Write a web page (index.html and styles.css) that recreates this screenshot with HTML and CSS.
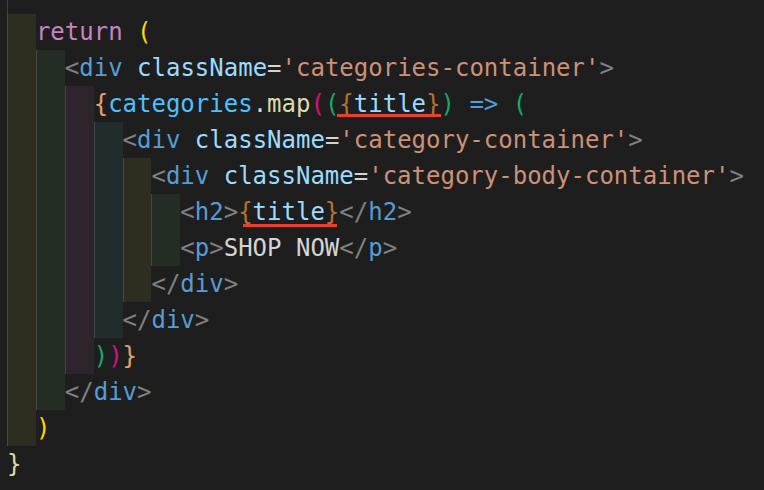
FILE: index.html
```html
<!DOCTYPE html>
<html lang="en">
<head>
  <meta charset="UTF-8" />
  <meta name="viewport" content="width=device-width, initial-scale=1.0">
  <title>categories snippet</title>
  <link rel="stylesheet" href="styles.css">
</head>
<body>
  <div class="editor">
    <div class="line top"><span class="guide"></span></div>
    <div class="line"><span class="ind l1"></span><span class="code"><span class="kw">return</span> <span class="p1">(</span></span></div>
    <div class="line"><span class="ind l1"></span><span class="ind l2"></span><span class="code"><span class="pt">&lt;</span><span class="tag">div</span> <span class="attr">className</span><span class="op">=</span><span class="str">'categories-container'</span><span class="pt">&gt;</span></span></div>
    <div class="line"><span class="ind l1"></span><span class="ind l2"></span><span class="ind l3"></span><span class="code"><span class="jsx">{</span><span class="var">categories</span><span class="op">.</span><span class="fn">map</span><span class="p2">(</span><span class="p3">(</span><span class="mark mark-a"><span class="brace">{</span><span class="prop">title</span><span class="brace">}</span></span><span class="p3">)</span> <span class="arrow">=&gt;</span> <span class="p3">(</span></span></div>
    <div class="line"><span class="ind l1"></span><span class="ind l2"></span><span class="ind l3"></span><span class="ind l4"></span><span class="code"><span class="pt">&lt;</span><span class="tag">div</span> <span class="attr">className</span><span class="op">=</span><span class="str">'category-container'</span><span class="pt">&gt;</span></span></div>
    <div class="line"><span class="ind l1"></span><span class="ind l2"></span><span class="ind l3"></span><span class="ind l4"></span><span class="ind l5"></span><span class="code"><span class="pt">&lt;</span><span class="tag">div</span> <span class="attr">className</span><span class="op">=</span><span class="str">'category-body-container'</span><span class="pt">&gt;</span></span></div>
    <div class="line"><span class="ind l1"></span><span class="ind l2"></span><span class="ind l3"></span><span class="ind l4"></span><span class="ind l5"></span><span class="ind l6"></span><span class="code"><span class="pt">&lt;</span><span class="tag">h2</span><span class="pt">&gt;</span><span class="mark mark-b"><span class="brace">{</span><span class="prop">title</span><span class="brace">}</span></span><span class="pt">&lt;/</span><span class="tag">h2</span><span class="pt">&gt;</span></span></div>
    <div class="line"><span class="ind l1"></span><span class="ind l2"></span><span class="ind l3"></span><span class="ind l4"></span><span class="ind l5"></span><span class="ind l6"></span><span class="code"><span class="pt">&lt;</span><span class="tag">p</span><span class="pt">&gt;</span><span class="txt">SHOP NOW</span><span class="pt">&lt;/</span><span class="tag">p</span><span class="pt">&gt;</span></span></div>
    <div class="line"><span class="ind l1"></span><span class="ind l2"></span><span class="ind l3"></span><span class="ind l4"></span><span class="ind l5"></span><span class="code"><span class="pt">&lt;/</span><span class="tag">div</span><span class="pt">&gt;</span></span></div>
    <div class="line"><span class="ind l1"></span><span class="ind l2"></span><span class="ind l3"></span><span class="ind l4"></span><span class="code"><span class="pt">&lt;/</span><span class="tag">div</span><span class="pt">&gt;</span></span></div>
    <div class="line"><span class="ind l1"></span><span class="ind l2"></span><span class="ind l3"></span><span class="code"><span class="p3">)</span><span class="p2">)</span><span class="jsx">}</span></span></div>
    <div class="line"><span class="ind l1"></span><span class="ind l2"></span><span class="code"><span class="pt">&lt;/</span><span class="tag">div</span><span class="pt">&gt;</span></span></div>
    <div class="line"><span class="ind l1"></span><span class="code"><span class="p1">)</span></span></div>
    <div class="line"><span class="code"><span class="end">}</span></span></div>
  </div>
</body>
</html>
```

FILE: styles.css
```css
body {
  margin: 0;
  background-color: #1e1e1e;
}
.editor {
  padding-left: 7px;
  font-family: "DejaVu Sans Mono", "Liberation Mono", monospace;
  font-size: 24px;
  color: #d4d4d4;
}
.line {
  display: flex;
  height: 36px;
}
.line.top {
  height: 14px;
}
.guide {
  width: 1px;
  background-color: #404040;
}
.ind {
  box-sizing: border-box;
  width: 2ch;
  border-left: 1px solid rgba(255, 255, 255, 0.14);
}
.l1, .l5 { background-color: rgba(255, 255, 64, 0.07); }
.l2, .l6 { background-color: rgba(127, 255, 127, 0.07); }
.l3 { background-color: rgba(255, 127, 255, 0.07); }
.l4 { background-color: rgba(79, 236, 236, 0.07); }
.code {
  white-space: pre;
  line-height: 36px;
}

.kw { color: #c586c0; }
.p1 { color: #ffd700; }
.p2 { color: #d4137e; }
.p3 { color: #18a866; }
.pt { color: #808080; }
.tag { color: #569cd6; }
.attr { color: #9cdcfe; }
.op { color: #d4d4d4; }
.str { color: #ce9178; }
.jsx { color: #e5a06b; }
.var { color: #4fc1ff; }
.fn { color: #dcdcaa; }
.brace { color: #b7712f; }
.prop { color: #9cdcfe; }
.arrow { color: #569cd6; }
.txt { color: #d4d4d4; }
.end { color: #dcdcaa; }

.mark {
  position: relative;
}
.mark::after {
  content: "";
  position: absolute;
  height: 3px;
  background-color: #e5412d;
}
.mark-a::after {
  left: -2px;
  right: 0;
  bottom: 1px;
}
.mark-b::after {
  left: 5px;
  right: 2px;
  bottom: -1px;
}
```
